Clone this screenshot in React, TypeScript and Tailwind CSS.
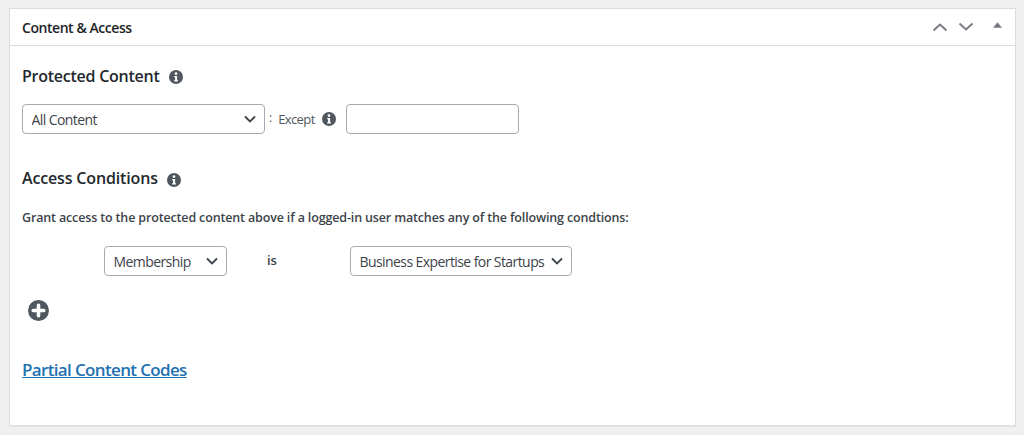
import React from 'react';

const fontStack = "font-['Open_Sans','Noto_Sans',sans-serif]";

const InfoIcon: React.FC<{ className?: string }> = ({ className }) => (
    <svg viewBox="0 0 14 14" className={className} aria-hidden="true">
        <circle cx="7" cy="7" r="7" fill="#50575e" />
        <circle cx="7" cy="3.6" r="1.35" fill="#fff" />
        <path d="M5.2 5.9h2.9v4.3h.9v1.3H5.2v-1.3h.9V7.2h-.9z" fill="#fff" />
    </svg>
);

const Chevron: React.FC = () => (
    <svg viewBox="0 0 12 8" className="pointer-events-none absolute right-[9px] top-[11px] h-2 w-3" aria-hidden="true">
        <path d="M1 1.5l5 5 5-5" fill="none" stroke="#3c434a" strokeWidth="1.8" />
    </svg>
);

const SelectBox: React.FC<{ value: string; className: string }> = ({ value, className }) => (
    <div className={`relative h-[30px] ${className}`}>
        <select
            defaultValue={value}
            className="h-full w-full appearance-none rounded-[4px] border border-[#a7aaad] bg-white pl-[8.5px] pr-5 text-[14px] tracking-[-0.58px] text-[#3c434a] outline-none"
        >
            <option>{value}</option>
        </select>
        <Chevron />
    </div>
);

const App: React.FC = () => {
    return (
        <div className={`h-[435px] w-[1024px] overflow-hidden bg-[#f0f0f1] px-[9px] pt-[8px] ${fontStack}`}>
            <section className="h-[418px] w-[1007px] border border-[#dcdcde] bg-white shadow-[0_1px_1px_rgba(0,0,0,0.04)]">
                <header className="flex h-[37px] items-center justify-between border-b border-[#dcdcde] pl-3">
                    <h2 className="text-[14px] font-semibold tracking-[-0.45px] text-[#1d2327]">Content &amp; Access</h2>
                    <div className="flex items-center">
                        <svg viewBox="0 0 16 10" className="h-[10px] w-4" aria-hidden="true">
                            <path d="M1.5 8.5L8 2.5l6.5 6" fill="none" stroke="#787c82" strokeWidth="2" />
                        </svg>
                        <svg viewBox="0 0 16 10" className="ml-[10px] h-[10px] w-4" aria-hidden="true">
                            <path d="M1.5 1.5L8 7.5l6.5-6" fill="none" stroke="#787c82" strokeWidth="2" />
                        </svg>
                        <svg viewBox="0 0 10 6" className="ml-[19px] mr-[13px] mb-[4px] h-[6px] w-[9px]" aria-hidden="true">
                            <path d="M5 0l5 6H0z" fill="#787c82" />
                        </svg>
                    </div>
                </header>

                <div className="px-3">
                    <div className="mt-[19px] flex items-center">
                        <h3 className="text-[16px] font-semibold leading-[22px] tracking-[-0.25px] text-[#23282d]">Protected Content</h3>
                        <InfoIcon className="ml-[9px] mt-[2px] h-[14px] w-[14px]" />
                    </div>

                    <div className="mt-[17px] flex items-center">
                        <SelectBox value="All Content" className="w-[243px]" />
                        <span className="ml-1 mb-[3px] text-[12px] text-[#50575e]">:</span>
                        <span className="ml-[6px] mt-[2px] text-[13px] tracking-[-0.6px] text-[#50575e]">Except</span>
                        <InfoIcon className="ml-[7px] h-[14px] w-[14px]" />
                        <input
                            type="text"
                            className="ml-[10px] h-[30px] w-[173px] rounded-[4px] border border-[#a7aaad] bg-white outline-none"
                        />
                    </div>

                    <div className="mt-[33px] flex items-center">
                        <h3 className="text-[16px] font-semibold leading-[22px] tracking-[-0.15px] text-[#23282d]">Access Conditions</h3>
                        <InfoIcon className="ml-[9px] mt-[4px] h-[14px] w-[14px]" />
                    </div>

                    <p className="mt-[20px] text-[12.5px] font-semibold leading-[18px] tracking-[-0.15px] text-[#3c434a]">
                        Grant access to the protected content above if a logged-in user matches any of the following condtions:
                    </p>

                    <div className="mt-[19px] flex items-center">
                        <SelectBox value="Membership" className="ml-[82px] w-[123px]" />
                        <span className="ml-[40px] w-[83px] text-[13px] font-semibold text-[#3c434a]">is</span>
                        <SelectBox value="Business Expertise for Startups" className="w-[222px]" />
                    </div>

                    <button type="button" className="ml-[6px] mt-[24px] block" aria-label="Add condition">
                        <svg viewBox="0 0 21 21" className="h-[21px] w-[21px]" aria-hidden="true">
                            <circle cx="10.5" cy="10.5" r="10.5" fill="#50575e" />
                            <path d="M10.5 5.2v10.6M5.2 10.5h10.6" stroke="#fff" strokeWidth="3.6" strokeLinecap="round" />
                        </svg>
                    </button>

                    <a href="#partial" className="mt-[37px] block text-[17px] font-semibold leading-[24px] tracking-[-0.65px] text-[#2271b1] underline">
                        Partial Content Codes
                    </a>
                </div>
            </section>
        </div>
    );
};

export default App;
